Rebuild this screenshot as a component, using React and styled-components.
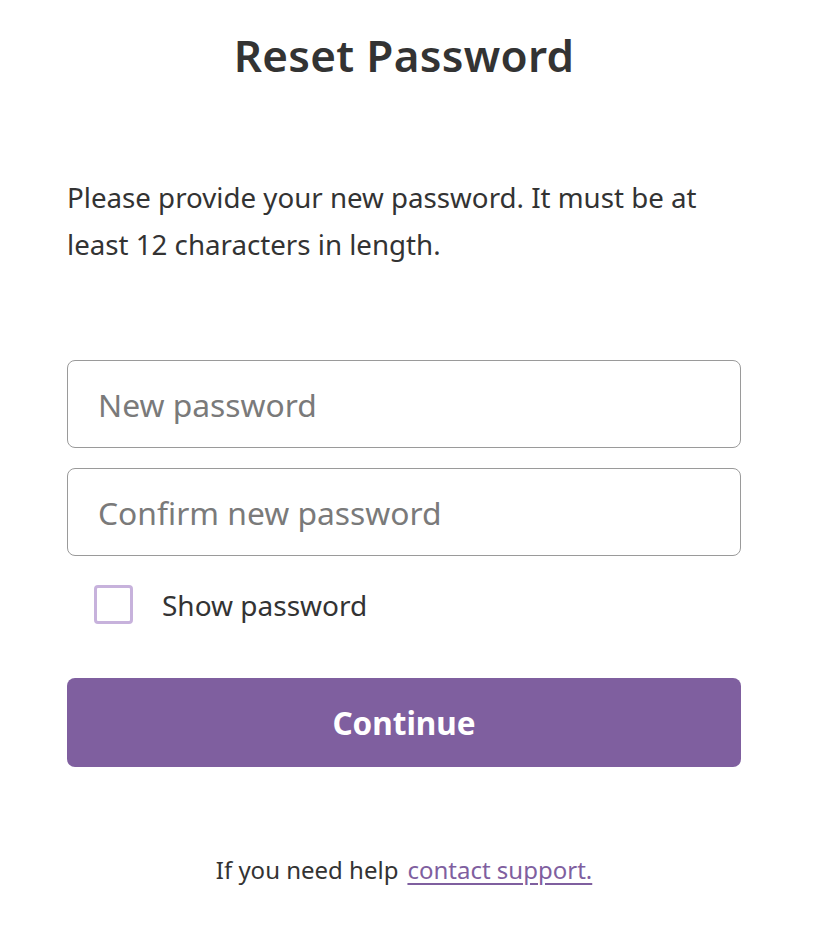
import React, { useState } from 'react'
import styled, { createGlobalStyle } from 'styled-components'

const GlobalStyle = createGlobalStyle`
  html, body {
    margin: 0;
    padding: 0;
    background: #ffffff;
  }
  body {
    font-family: "Noto Sans", Lato, "Liberation Sans", sans-serif;
    color: #333333;
  }
`

const Page = styled.main`
  width: 674px;
  margin-left: 67px;
  padding-top: 22px;
  display: flex;
  flex-direction: column;
`

const Title = styled.h1`
  margin: 0;
  text-align: center;
  font-size: 44px;
  font-weight: 600;
  line-height: 66px;
  color: #333333;
  letter-spacing: 0.3px;
`

const Intro = styled.p`
  margin: 86px 0 0;
  font-size: 27.7px;
  line-height: 47px;
  color: #333333;
`

const Form = styled.form`
  margin-top: 92px;
  display: flex;
  flex-direction: column;
`

const Field = styled.input`
  box-sizing: border-box;
  width: 100%;
  height: 88px;
  padding: 0 30px;
  margin-bottom: 20px;
  border: 1.5px solid #9a9a9a;
  border-radius: 8px;
  font-family: inherit;
  font-size: 31.8px;
  color: #333333;
  outline: none;

  &::placeholder {
    color: #7a7a7a;
  }
`

const CheckRow = styled.label`
  display: flex;
  align-items: center;
  gap: 29px;
  margin: 9px 0 0 27px;
  font-size: 28px;
  color: #333333;
  cursor: pointer;
`

const Box = styled.span`
  box-sizing: border-box;
  width: 39px;
  height: 39px;
  border: 3px solid #c7b2dc;
  border-radius: 4px;
  background: ${p => (p.$on ? '#7f5f9f' : '#ffffff')};
`

const HiddenCheck = styled.input`
  display: none;
`

const Button = styled.button`
  margin-top: 54px;
  height: 89px;
  border: none;
  border-radius: 8px;
  background: #7f5f9f;
  color: #ffffff;
  font-family: inherit;
  font-size: 31.5px;
  font-weight: 700;
  cursor: pointer;
`

const Help = styled.p`
  margin: 86px 0 0;
  text-align: center;
  font-size: 24px;
  color: #333333;
`

const Link = styled.a`
  margin-left: 9px;
  color: #7f5f9f;
  text-decoration: underline;
  text-underline-offset: 4px;
`

export default function App() {
  const [show, setShow] = useState(false)
  const type = show ? 'text' : 'password'

  return (
    <>
      <GlobalStyle />
      <Page>
        <Title>Reset Password</Title>
        <Intro>
          Please provide your new password. It must be at least 12 characters in length.
        </Intro>
        <Form onSubmit={e => e.preventDefault()}>
          <Field type={type} placeholder="New password" />
          <Field type={type} placeholder="Confirm new password" />
          <CheckRow>
            <HiddenCheck type="checkbox" checked={show} onChange={() => setShow(!show)} />
            <Box $on={show} />
            Show password
          </CheckRow>
          <Button type="submit">Continue</Button>
        </Form>
        <Help>
          If you need help<Link href="#">contact support.</Link>
        </Help>
      </Page>
    </>
  )
}
